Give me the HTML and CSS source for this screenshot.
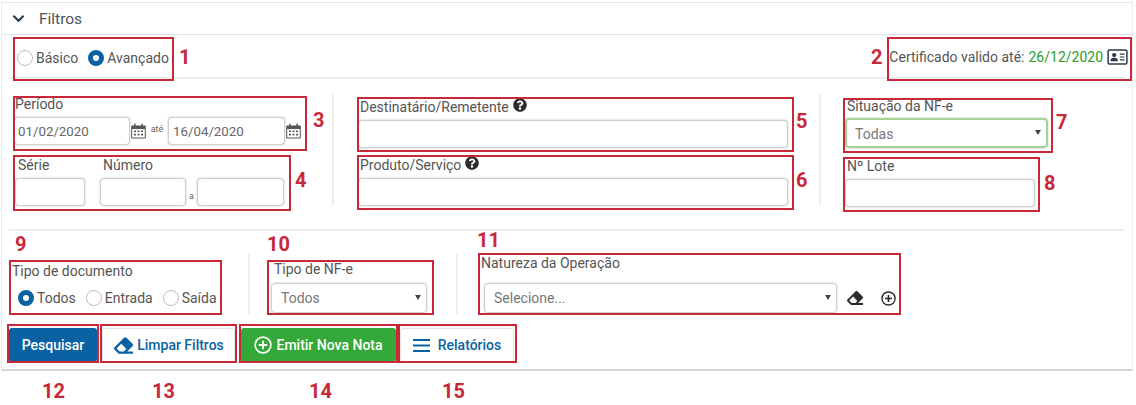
FILE: index.html
```html
<!DOCTYPE html>
<html lang="en">
<head>
    <meta charset="UTF-8">
    <meta name="viewport" content="width=device-width, initial-scale=1.0">
    <title>Filtros</title>
    <link rel="stylesheet" href="styles.css">
</head>
<body>
    <div class="page">
        <div class="panel">
            <!-- Header -->
            <div class="panel-head">
                <svg class="chevron" viewBox="0 0 14 9"><path d="M1.5 1.5 7 7l5.5-5.5" fill="none" stroke="#2b3a4a" stroke-width="2.2"/></svg>
                <span>Filtros</span>
            </div>

            <div class="panel-body">
                <!-- Basic / advanced + certificate -->
                <div class="mode-row">
                    <div class="radios radios-mode">
                        <span class="radio"></span><span class="radio-text">Básico</span>
                        <span class="radio on"></span><span class="radio-text">Avançado</span>
                    </div>
                    <div class="cert">
                        Certificado valido até: <span class="cert-date">26/12/2020</span>
                        <svg class="cert-icon" viewBox="0 0 22 17">
                            <rect x="1" y="1" width="20" height="15" rx="1.5" fill="none" stroke="#2b3a4a" stroke-width="1.6"/>
                            <circle cx="7.5" cy="6.5" r="2.3" fill="#2b3a4a"/>
                            <path d="M3.5 13c0-2.5 1.6-3.6 4-3.6s4 1.1 4 3.6z" fill="#2b3a4a"/>
                            <path d="M13.5 5.5h5M13.5 8.5h5M13.5 11.5h5" stroke="#2b3a4a" stroke-width="1.2"/>
                        </svg>
                    </div>
                </div>

                <!-- Main fields -->
                <div class="main-row">
                    <div class="col col-a">
                        <div class="field-date">
                            <label class="lbl lbl-periodo">Período</label>
                            <div class="date-line">
                                <input class="input date" value="01/02/2020">
                                <svg class="cal" viewBox="0 0 15 16"><use href="#cal"/></svg>
                                <span class="mini mini-ate">até</span>
                                <input class="input date date-b" value="16/04/2020">
                                <svg class="cal" viewBox="0 0 15 16"><use href="#cal"/></svg>
                            </div>
                        </div>
                        <div class="serie-line">
                            <div class="serie">
                                <label class="lbl">Série</label>
                                <input class="input serie-in">
                            </div>
                            <div class="numero">
                                <label class="lbl">Número</label>
                                <div class="numero-line">
                                    <input class="input num-a">
                                    <span class="mini">a</span>
                                    <input class="input num-b">
                                </div>
                            </div>
                        </div>
                    </div>

                    <div class="col col-b">
                        <label class="lbl lbl-dest">Destinatário/Remetente <svg class="help" viewBox="0 0 512 512"><use href="#help"/></svg></label>
                        <input class="input wide">
                        <label class="lbl lbl-next">Produto/Serviço <svg class="help" viewBox="0 0 512 512"><use href="#help"/></svg></label>
                        <input class="input wide">
                    </div>

                    <div class="col col-c">
                        <label class="lbl lbl-sit">Situação da NF-e</label>
                        <div class="select select-ok">Todas<span class="caret"></span></div>
                        <label class="lbl lbl-lote">Nº Lote</label>
                        <input class="input lote">
                    </div>
                </div>

                <!-- Second row -->
                <div class="second-row">
                    <div class="tipo-doc">
                        <label class="lbl">Tipo de documento</label>
                        <div class="radios radios-doc">
                            <span class="radio on"></span><span class="radio-text">Todos</span>
                            <span class="radio"></span><span class="radio-text">Entrada</span>
                            <span class="radio"></span><span class="radio-text">Saída</span>
                        </div>
                    </div>
                    <div class="tipo-nf">
                        <label class="lbl">Tipo de NF-e</label>
                        <div class="select select-nf">Todos<span class="caret"></span></div>
                    </div>
                    <div class="natureza">
                        <label class="lbl">Natureza da Operação</label>
                        <div class="natureza-line">
                            <div class="select select-nat">Selecione...<span class="caret"></span></div>
                            <svg class="nat-eraser" viewBox="0 0 512 512"><use href="#eraser" fill="#2b2b2b"/></svg>
                            <svg class="nat-plus" viewBox="0 0 16 16"><use href="#plus" stroke="#2b2b2b"/></svg>
                        </div>
                    </div>
                </div>

                <!-- Buttons -->
                <div class="buttons">
                    <button class="btn btn-search">Pesquisar</button>
                    <button class="btn btn-white btn-clear"><svg class="btn-eraser" viewBox="0 0 512 512"><use href="#eraser" fill="#0a62a3"/></svg>Limpar Filtros</button>
                    <button class="btn btn-new"><svg class="btn-plus" viewBox="0 0 16 16"><use href="#plus" stroke="#fff"/></svg>Emitir Nova Nota</button>
                    <button class="btn btn-white btn-rel">
                        <svg class="btn-bars" viewBox="0 0 17 15"><path d="M0 2h17M0 7.5h17M0 13h17" stroke="#0a62a3" stroke-width="2"/></svg>Relatórios
                    </button>
                </div>
            </div>
        </div>

        <!-- Annotations over the screenshot -->
        <div class="mark m1"></div><div class="mark m2"></div><div class="mark m3"></div>
        <div class="mark m4"></div><div class="mark m5"></div><div class="mark m6"></div>
        <div class="mark m7"></div><div class="mark m8"></div><div class="mark m9"></div>
        <div class="mark m10"></div><div class="mark m11"></div><div class="mark m12"></div>
        <div class="mark m13"></div><div class="mark m14"></div><div class="mark m15"></div>

        <span class="num n1">1</span><span class="num n2">2</span><span class="num n3">3</span>
        <span class="num n4">4</span><span class="num n5">5</span><span class="num n6">6</span>
        <span class="num n7">7</span><span class="num n8">8</span><span class="num n9">9</span>
        <span class="num n10">10</span><span class="num n11">11</span><span class="num n12">12</span>
        <span class="num n13">13</span><span class="num n14">14</span><span class="num n15">15</span>
    </div>

    <!-- Shared icons -->
    <svg class="defs" width="0" height="0">
        <defs>
            <g id="help"><path d="M504 256c0 136.997-111.043 248-248 248S8 392.997 8 256C8 119.083 119.043 8 256 8s248 111.083 248 248zM262.655 90c-54.497 0-89.255 22.957-116.549 63.758-3.536 5.286-2.353 12.415 2.715 16.258l34.699 26.31c5.205 3.947 12.621 3.008 16.665-2.122 17.864-22.658 30.113-35.797 57.303-35.797 20.429 0 45.698 13.148 45.698 32.958 0 14.976-12.363 22.667-32.534 33.976C247.128 238.528 216 254.941 216 296v4c0 6.627 5.373 12 12 12h56c6.627 0 12-5.373 12-12v-1.333c0-28.462 83.186-29.647 83.186-106.667 0-58.002-60.165-102-116.531-102zM256 338c-25.365 0-46 20.635-46 46 0 25.364 20.635 46 46 46s46-20.636 46-46c0-25.365-20.635-46-46-46z" fill="#2b2b2b"/></g>
            <g id="eraser"><path d="M497.941 273.941c18.745-18.745 18.745-49.137 0-67.882l-160-160c-18.745-18.745-49.137-18.745-67.882 0l-256 256c-18.745 18.745-18.745 49.137 0 67.882l96 96A48.004 48.004 0 0 0 144 480h356c6.627 0 12-5.373 12-12v-40c0-6.627-5.373-12-12-12H355.883l142.058-142.059zm-302.627-62.627l137.373 137.373L265.373 416H150.628l-80-80 124.686-124.686z"/></g>
            <g id="plus" fill="none" stroke-width="1.5"><circle cx="8" cy="8" r="7"/><path d="M8 4.2v7.6M4.2 8h7.6" stroke-width="1.8"/></g>
            <g id="cal" fill="#555">
                <path d="M1 2.5h13a.8.8 0 0 1 .8.8v11.4a.8.8 0 0 1-.8.8H1a.8.8 0 0 1-.8-.8V3.3a.8.8 0 0 1 .8-.8zm.2 3.5v8.5h12.6V6z" fill-rule="evenodd"/>
                <rect x="3.2" y="0.6" width="1.4" height="3"/><rect x="10.4" y="0.6" width="1.4" height="3"/>
                <rect x="3" y="7.5" width="2" height="1.6"/><rect x="6.5" y="7.5" width="2" height="1.6"/><rect x="10" y="7.5" width="2" height="1.6"/>
                <rect x="3" y="10.8" width="2" height="1.6"/><rect x="6.5" y="10.8" width="2" height="1.6"/><rect x="10" y="10.8" width="2" height="1.6"/>
            </g>
        </defs>
    </svg>
</body>
</html>
```

FILE: styles.css
```css
/* Global */
body {
    margin: 0;
    font-family: Roboto, "Liberation Sans", sans-serif;
    font-size: 14px;
    color: #555;
    background: #fff;
}

.page {
    position: relative;
    width: 1136px;
    height: 405px;
    overflow: hidden;
}

.defs {
    position: absolute;
}

/* Panel */
.panel {
    width: 1130px;
    height: 366px;
    margin: 2px 0 0 1px;
    border-top: 1px solid #e6eaee;
    border-left: 1px solid #ececec;
    border-right: 1px solid #ececec;
    border-bottom: 2px solid #d4d4d4;
}

.panel-head {
    display: flex;
    align-items: center;
    height: 31px;
    padding-left: 10px;
    border-bottom: 1px solid #e2e5e8;
    font-size: 15.5px;
    color: #4a545e;
}

.chevron {
    width: 13px;
    height: 9px;
    margin-right: 14px;
}

.panel-body {
    padding: 0 7px;
}

/* Mode row */
.mode-row {
    display: flex;
    justify-content: space-between;
    height: 42px;
    border-bottom: 2px solid #eee;
}

.radios {
    display: flex;
    align-items: center;
    padding-left: 8px;
}

.radios-mode {
    padding-top: 4px;
}

.radio {
    width: 14px;
    height: 14px;
    border: 1px solid #b9bec4;
    border-radius: 50%;
    margin-right: 3px;
    background: #fff;
    flex: none;
}

.radio.on {
    border: 5px solid #0a62a3;
    width: 6px;
    height: 6px;
}

.radio-text {
    margin-right: 10px;
}

.cert {
    display: flex;
    align-items: center;
    gap: 4px;
    margin-right: -3px;
    padding-top: 2px;
}

.cert-date {
    color: #2a9d2a;
}

.cert-icon {
    width: 21px;
    height: 16px;
}

/* Main fields */
.main-row {
    display: flex;
    height: 150px;
    border-bottom: 2px solid #eee;
}

.col {
    height: 111px;
    margin-top: 15px;
}

.col-a {
    width: 318px;
    padding-left: 5px;
    border-right: 2px solid #eee;
}

.col-b {
    width: 430px;
    padding: 0 29px 0 26px;
    border-right: 2px solid #eee;
}

.col-c {
    padding-left: 26px;
}

.lbl {
    display: block;
    line-height: 20px;
    height: 20px;
}

.lbl-periodo {
    padding-left: 1px;
}

.lbl-dest {
    padding-top: 3px;
}

.lbl-next {
    margin-top: 7px;
}

.lbl-sit {
    padding-top: 2px;
}

.lbl-lote {
    margin-top: 8px;
}

.input {
    display: block;
    box-sizing: border-box;
    height: 28px;
    margin-top: 3px;
    border: 1px solid #cfcfcf;
    border-radius: 4px;
    box-shadow: 0 0 2px #bbb;
    background: #fff;
    font-family: inherit;
    font-size: 13.3px;
    color: #666;
    padding: 0 3px;
    outline: none;
}

.date-line {
    display: flex;
    align-items: center;
    margin-top: 3px;
}

.date {
    width: 116px;
    margin-top: 0;
}

.date-b {
    width: 117px;
    padding-left: 4px;
}

.date + .cal {
    margin-left: 1px;
}

.cal {
    width: 15px;
    height: 16px;
    flex: none;
}

.mini {
    font-size: 9px;
    color: #666;
}

.mini-ate {
    width: 22px;
    text-align: center;
    margin-bottom: 4px;
}

.serie-line {
    display: flex;
    margin-top: 10px;
}

.serie {
    width: 85px;
    margin-left: 1px;
}

.serie .lbl,
.numero .lbl {
    padding-left: 3px;
}

.serie-in {
    width: 70px;
}

.numero-line {
    display: flex;
    align-items: flex-end;
    margin-top: 3px;
}

.numero-line .input {
    margin-top: 0;
}

.num-a {
    width: 86px;
}

.num-b {
    width: 87px;
}

.numero-line .mini {
    width: 11px;
    text-align: center;
    margin-bottom: 5px;
}

.wide {
    width: 430px;
    margin-left: -2px;
}

.col-b .lbl {
    display: flex;
    gap: 4px;
    align-items: flex-start;
}

.help {
    width: 14px;
    height: 14px;
    margin-top: 1px;
}

/* Selects */
.select {
    position: relative;
    box-sizing: border-box;
    height: 30px;
    line-height: 28px;
    border: 1px solid #cfcfcf;
    border-radius: 4px;
    box-shadow: 0 0 2px #bbb;
    padding-left: 9px;
    color: #777;
}

.select-ok {
    width: 203px;
    margin: 2px 0 0 -2px;
    border: 2px solid #a5d394;
    padding-left: 8px;
}

.caret {
    position: absolute;
    right: 5px;
    top: 11px;
    border-left: 3px solid transparent;
    border-right: 3px solid transparent;
    border-top: 5px solid #444;
}

.select-ok .caret {
    top: 10px;
}

.lote {
    width: 190px;
    margin-left: -2px;
}

/* Second row */
.second-row {
    display: flex;
    height: 97px;
}

.tipo-doc {
    width: 239px;
    height: 84px;
    margin-top: 30px;
    padding-left: 3px;
    box-sizing: border-box;
}

.radios-doc {
    padding-left: 6px;
    margin-top: 9px;
}

.tipo-nf {
    width: 208px;
    height: 60px;
    margin-top: 23px;
    padding-left: 21px;
    box-sizing: border-box;
    border-left: 2px solid #eee;
}

.tipo-nf .lbl {
    margin: 8px 0 0 3px;
    height: 14px;
    line-height: 14px;
}

.select-nf {
    width: 156px;
    margin-top: 7px;
}

.natureza {
    height: 60px;
    margin-top: 23px;
    padding-left: 23px;
    border-left: 2px solid #eee;
}

.natureza .lbl {
    margin-top: -1px;
}

.natureza-line {
    display: flex;
    align-items: center;
    margin-top: 10px;
    padding-left: 3px;
}

.select-nat {
    width: 353px;
}

.nat-eraser {
    width: 16px;
    height: 16px;
    margin-left: 10px;
}

.nat-plus {
    width: 15px;
    height: 15px;
    margin-left: 18px;
}

/* Buttons */
.buttons {
    display: flex;
    height: 34px;
}

.btn {
    display: flex;
    align-items: center;
    justify-content: center;
    box-sizing: border-box;
    height: 34px;
    border: none;
    border-radius: 3px;
    font-family: inherit;
    font-size: 14px;
    font-weight: 500;
    padding: 0;
}

.btn-search {
    width: 88px;
    background: #0a62a3;
    color: #fff;
}

.btn-white {
    background: #fff;
    color: #0a62a3;
    border: 1px solid #e2e2e2;
}

.btn-clear {
    width: 133px;
    margin-left: 5px;
    padding-left: 1px;
}

.btn-new {
    width: 155px;
    margin-left: 6px;
    background: #34a838;
    color: #fff;
}

.btn-rel {
    width: 114px;
    margin-left: 4px;
}

.btn-eraser {
    width: 19px;
    height: 19px;
    margin-right: 4px;
}

.btn-plus {
    width: 18px;
    height: 18px;
    margin-right: 4px;
}

.btn-bars {
    width: 17px;
    height: 15px;
    margin-right: 8px;
}

/* Annotation boxes */
.mark {
    position: absolute;
    box-sizing: border-box;
    border: 2px solid #c8283a;
}

.m1 { left: 13px; top: 37px; width: 161px; height: 44px; }
.m2 { left: 887px; top: 37px; width: 245px; height: 44px; }
.m3 { left: 13px; top: 96px; width: 294px; height: 55px; }
.m4 { left: 13px; top: 155px; width: 278px; height: 56px; }
.m5 { left: 357px; top: 97px; width: 437px; height: 55px; }
.m6 { left: 357px; top: 155px; width: 437px; height: 55px; }
.m7 { left: 843px; top: 98px; width: 210px; height: 55px; }
.m8 { left: 843px; top: 157px; width: 197px; height: 55px; }
.m9 { left: 9px; top: 260px; width: 213px; height: 55px; }
.m10 { left: 267px; top: 260px; width: 167px; height: 55px; }
.m11 { left: 478px; top: 253px; width: 423px; height: 62px; }
.m12 { left: 7px; top: 324px; width: 92px; height: 39px; }
.m13 { left: 100px; top: 324px; width: 137px; height: 39px; }
.m14 { left: 239px; top: 324px; width: 159px; height: 39px; }
.m15 { left: 398px; top: 324px; width: 119px; height: 39px; }

/* Annotation numbers */
.num {
    position: absolute;
    font-size: 20px;
    font-weight: 700;
    line-height: 20px;
    color: #c8283a;
}

.n1 { left: 179px; top: 47px; }
.n2 { left: 871px; top: 47px; }
.n3 { left: 313px; top: 110px; }
.n4 { left: 295px; top: 170px; }
.n5 { left: 796px; top: 111px; }
.n6 { left: 796px; top: 170px; }
.n7 { left: 1056px; top: 112px; }
.n8 { left: 1044px; top: 173px; }
.n9 { left: 15px; top: 234px; }
.n10 { left: 267px; top: 234px; }
.n11 { left: 477px; top: 230px; }
.n12 { left: 42px; top: 381px; }
.n13 { left: 152px; top: 381px; }
.n14 { left: 309px; top: 381px; }
.n15 { left: 442px; top: 381px; }
```
